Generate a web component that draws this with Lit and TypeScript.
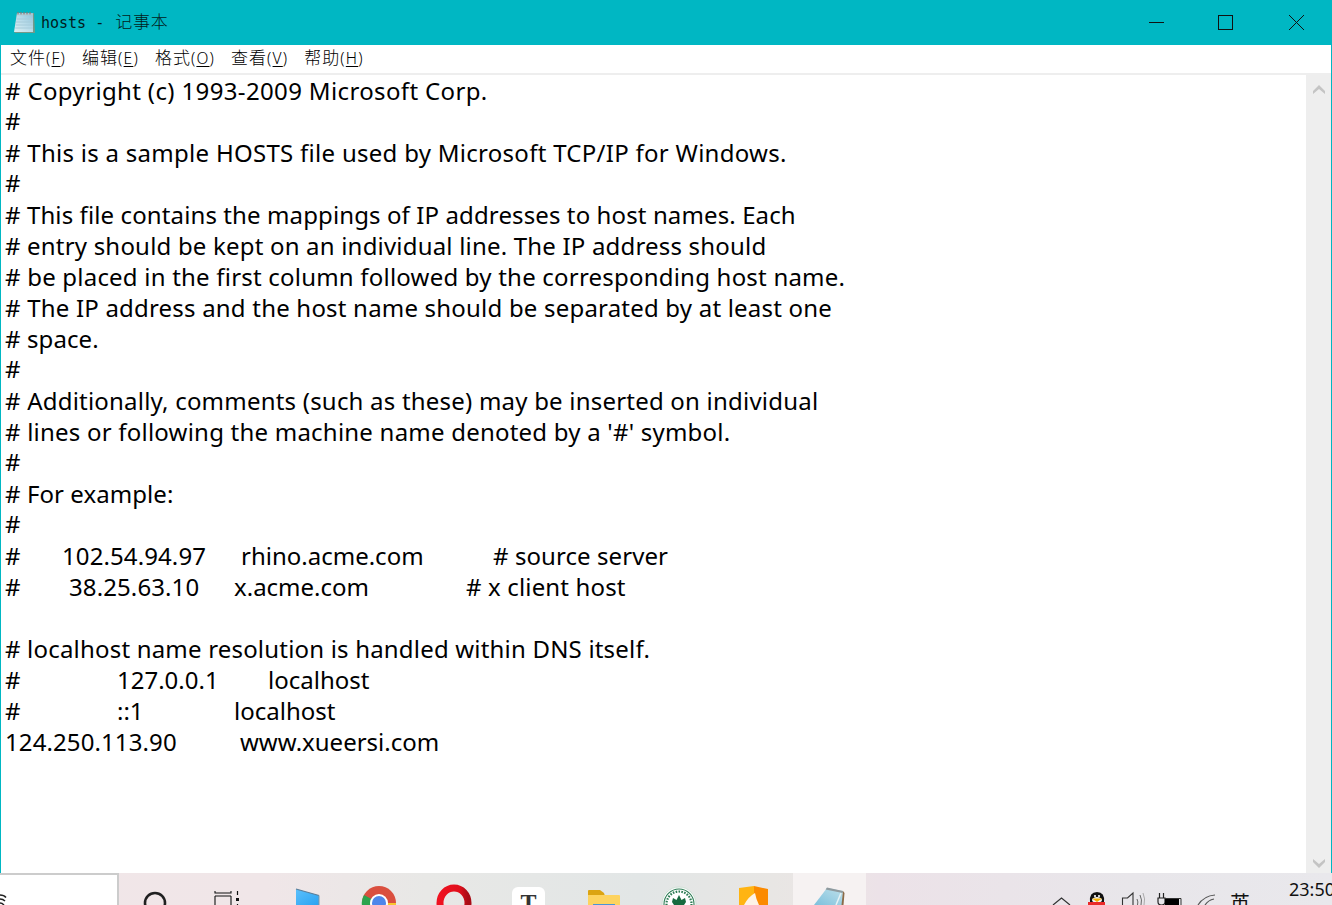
import { LitElement, html, css, svg } from "lit";
import { customElement } from "lit/decorators.js";

type Seg = [string, number, number?];
const LINES: Seg[][] = [
  [["# Copyright (c) 1993-2009 Microsoft Corp.", 0, 0.36]],
  [["#", 0]],
  [["# This is a sample HOSTS file used by Microsoft TCP/IP for Windows.", 0, 0.28]],
  [["#", 0]],
  [["# This file contains the mappings of IP addresses to host names. Each", 0, 0.11]],
  [["# entry should be kept on an individual line. The IP address should", 0, 0.19]],
  [["# be placed in the first column followed by the corresponding host name.", 0, 0.21]],
  [["# The IP address and the host name should be separated by at least one", 0, 0.2]],
  [["# space.", 0, 0.1]],
  [["#", 0]],
  [["# Additionally, comments (such as these) may be inserted on individual", 0, 0.21]],
  [["# lines or following the machine name denoted by a '#' symbol.", 0, 0.22]],
  [["#", 0]],
  [["# For example:", 0, 0.07]],
  [["#", 0]],
  [["#", 0], ["102.54.94.97", 57, 0.1], ["rhino.acme.com", 236], ["# source server", 488, 0.08]],
  [["#", 0], ["38.25.63.10", 64, 0.1], ["x.acme.com", 229], ["# x client host", 461, 0.15]],
  [["", 0]],
  [["# localhost name resolution is handled within DNS itself.", 0, 0.19]],
  [["#", 0], ["127.0.0.1", 112], ["localhost", 263]],
  [["#", 0], ["::1", 112], ["localhost", 229]],
  [["124.250.113.90", 0, 0.1], ["www.xueersi.com", 235]],
];
const MENUS: [string, string][] = [
  ["文件", "F"],
  ["编辑", "E"],
  ["格式", "O"],
  ["查看", "V"],
  ["帮助", "H"],
];

@customElement("app-root")
export class AppRoot extends LitElement {
  static styles = css`
    :host {
      display: flex;
      flex-direction: column;
      width: 1332px;
      height: 905px;
      overflow: hidden;
      background: #fff;
      font-family: "Noto Sans", "Noto Sans CJK SC", sans-serif;
    }
    .window {
      flex: 1;
      min-height: 0;
      display: flex;
      flex-direction: column;
      border-left: 1px solid #00b7c3;
      border-right: 1px solid #00b7c3;
    }
    .titlebar {
      height: 45px;
      flex: none;
      margin: 0 -1px;
      background: #00b7c3;
      display: flex;
      align-items: center;
      padding-left: 13px;
      color: #021c20;
      box-sizing: border-box;
    }
    .title {
      margin-left: 4px;
      padding-bottom: 4px;
      white-space: pre;
      display: flex;
      align-items: center;
    }
    .title-latin {
      font-family: "DejaVu Sans Mono", monospace;
      font-size: 15px;
      margin-top: 4px;
    }
    .title-cjk {
      font-family: "Noto Sans CJK SC", sans-serif;
      font-size: 17px;
      letter-spacing: 0.7px;
      font-weight: 300;
      margin-left: 2px;
    }
    .controls {
      margin-left: auto;
      display: flex;
      height: 45px;
    }
    .ctl {
      width: 71px;
      display: flex;
      align-items: center;
      justify-content: center;
    }
    .ctl.min {
      margin-right: -2px;
    }
    .menubar {
      height: 23px;
      padding: 0 0 5px 9px;
      flex: none;
      display: flex;
      align-items: center;
      gap: 16px;
      font-size: 15.5px;
      font-weight: 300;
      color: #000;
      border-bottom: 2px solid #eeeeee;
      font-family: "Noto Sans CJK SC", sans-serif;
    }
    .menu-cjk {
      font-size: 17px;
      letter-spacing: 1px;
    }
    .menu-key {
      letter-spacing: 1.2px;
      font-family: "Noto Sans", sans-serif;
    }
    .menubar u {
      text-underline-offset: 2px;
    }
    .body {
      flex: 1;
      min-height: 0;
      display: flex;
    }
    .editor {
      flex: 1;
      padding: 0 0 0 4px;
      font-size: 24px;
      line-height: 31px;
      color: #000;
      overflow: hidden;
    }
    .line {
      display: flex;
      height: 31px;
      white-space: pre;
    }
    .seg {
      flex: none;
    }
    .line.lone .seg {
      margin-top: -1px;
    }
    .scroll {
      width: 25px;
      flex: none;
      background: #eeeeee;
      display: flex;
      flex-direction: column;
      justify-content: space-between;
      align-items: center;
      padding: 10px 0 5px;
      box-sizing: border-box;
    }
    .taskbar {
      height: 32px;
      flex: none;
      display: flex;
      overflow: hidden;
      background: linear-gradient(90deg, #f1e6e8 0%, #f0e6e8 20%, #e8e8e6 32%, #e2e6e6 48%, #e8e6e4 58%, #ece5e5 63%, #ece2e8 66%, #e8e6ea 85%, #e9e8ec 100%);
    }
    .start {
      width: 119px;
      flex: none;
      background: #fff;
      border-top: 2px solid #cccccc;
      border-right: 2px solid #cccccc;
      box-sizing: border-box;
      overflow: hidden;
    }
    .start svg {
      display: block;
    }
    .tb-icons {
      flex: 1;
      position: relative;
    }
    .tb-svg {
      position: absolute;
      left: 0;
      top: 0;
    }
    .clock {
      position: absolute;
      left: 1170px;
      top: 4px;
      font-size: 18px;
      line-height: 24px;
      color: #111;
      white-space: pre;
    }
    .ime {
      position: absolute;
      left: 1111px;
      top: 16px;
      font-family: "Noto Sans CJK SC", sans-serif;
      font-size: 20px;
      line-height: 28px;
      color: #111;
    }
  `;

  private seg(lineSegs: Seg[], i: number) {
    const [t, x, ls] = lineSegs[i];
    const next = lineSegs[i + 1];
    const parts: string[] = [];
    if (next) parts.push(`width:${next[1] - x}px`);
    if (ls) parts.push(`letter-spacing:${ls}px`);
    return html`<span class="seg" style=${parts.join(";")}>${t}</span>`;
  }

  private notepad() {
    return html`<svg width="24" height="24" viewBox="0 0 24 24">
      <defs>
        <linearGradient id="np" x1="0" y1="1" x2="1" y2="0">
          <stop offset="0" stop-color="#dff0f2" />
          <stop offset="0.5" stop-color="#b9dcea" />
          <stop offset="1" stop-color="#8fc2d8" />
        </linearGradient>
      </defs>
      <path d="M4 2h17l1 20H1.5z" fill="#9b8f74" opacity="0.75" />
      <path d="M4 2h16v19H1z" fill="url(#np)" />
      <path d="M3.4 8h16.6M3 11h17M2.6 14h17.4M2.2 17h17.8" stroke="#a6cbda" stroke-width="1" />
      <path d="M5 1v3M8 1v3M11 1v3M14 1v3M17 1v3" stroke="#7d7d7d" stroke-width="1.4" />
      <path d="M4 3.5h16" stroke="#b7c5ca" stroke-width="1.6" opacity="0.7" />
    </svg>`;
  }

  private taskIcons() {
    return svg`
      <svg class="tb-svg" width="1213" height="32" viewBox="119 873 1213 32">
        <defs>
          <linearGradient id="npb" x1="0" y1="1" x2="1" y2="0">
            <stop offset="0" stop-color="#7cc0dc"/>
            <stop offset="1" stop-color="#bfe0ea"/>
          </linearGradient>
          <linearGradient id="blu" x1="0" y1="0" x2="1" y2="1">
            <stop offset="0" stop-color="#5bc0fb"/>
            <stop offset="1" stop-color="#2ba3f2"/>
          </linearGradient>
          <linearGradient id="opr" x1="0" y1="0" x2="1" y2="0">
            <stop offset="0" stop-color="#ef1220"/>
            <stop offset="0.7" stop-color="#e00f1c"/>
            <stop offset="1" stop-color="#a80c16"/>
          </linearGradient>
        </defs>
        <!-- search -->
        <circle cx="155" cy="903" r="10" fill="none" stroke="#202020" stroke-width="2.6"/>
        <!-- task view -->
        <path d="M215 891v2h16v-2M215 896h16M215 896v9M231 896v9" fill="none" stroke="#111" stroke-width="1.1"/>
        <rect x="236" y="898" width="3" height="3" fill="#111"/>
        <path d="M237.5 891v4M237.5 904v1" stroke="#111" stroke-width="1.2"/>
        <!-- blue -->
        <path d="M296 889l23 6.5V905h-23z" fill="url(#blu)"/>
        <path d="M296 889l23 6.5" fill="none" stroke="#5a7d98" stroke-width="1.1"/>
        <path d="M319 895.5V905" fill="none" stroke="#7f97a6" stroke-width="1"/>
        <!-- chrome -->
        <circle cx="379" cy="903" r="17" fill="#da4f3f"/>
        <path d="M379 903L364 895a17 17 0 0 0 8 24z" fill="#2da44e"/>
        <path d="M379 903h17a17 17 0 0 1-9 15z" fill="#f8c72f"/>
        <circle cx="379" cy="903" r="9" fill="#fff"/>
        <circle cx="379" cy="903" r="7" fill="#4e86ea"/>
        <!-- opera -->
        <ellipse cx="454" cy="903" rx="14" ry="15" fill="none" stroke="url(#opr)" stroke-width="7"/>
        <!-- typora -->
        <rect x="512" y="887" width="33" height="26" rx="6" fill="#fff"/>
        <text x="528.5" y="910" text-anchor="middle" font-family="Liberation Serif" font-weight="bold" font-size="24" fill="#333">T</text>
        <!-- folder -->
        <path d="M588 891q0-1 1-1h11l4 3 1 3h-17z" fill="#dba412"/>
        <path d="M588 895h31q1 0 1 1v9h-32z" fill="#fdd35f"/>
        <rect x="593" y="904" width="22" height="1" fill="#4a95d6"/>
        <!-- seal -->
        <circle cx="679" cy="904" r="17" fill="#fff" stroke="#cfe0d6" stroke-width="1"/>
        <circle cx="679" cy="904" r="15" fill="none" stroke="#2d7d55" stroke-width="1.1"/>
        <circle cx="679" cy="904" r="12.5" fill="none" stroke="#2d7d55" stroke-width="2.2" stroke-dasharray="1.6 1.3"/>
        <circle cx="679" cy="904" r="10" fill="#fff"/>
        <path d="M679 895l2.5 5 3.5-2 1 4-2 3h-10l-2-3 1-4 3.5 2z" fill="#176b40"/>
        <!-- orange -->
        <path d="M739 888l15-2 0 19h-15z" fill="#ffb412"/>
        <path d="M754 886l14 3v16h-14z" fill="#fb8a00"/>
        <path d="M744 905q4-8 11-12q1 6 4 12z" fill="#fdf2e6"/>
        <!-- notepad -->
        <rect x="793" y="873" width="73" height="32" fill="#f6f2f2"/>
        <path d="M827 888l16 3-1 14h-28z" fill="url(#npb)"/>
        <path d="M827 887.5l16 3.5-.4 2-17-3.5z" fill="#8f9a9e"/>
        <path d="M843 891l1.5 2-1 12h-2z" fill="#8a6b48"/>
        <path d="M836 905l5-12" stroke="#e6f2f5" stroke-width="1.5"/>
        <!-- chevron -->
        <path d="M1053 905l8.5-7 8.5 7" fill="none" stroke="#333" stroke-width="1.2"/>
        <!-- qq -->
        <path d="M1090 902q-1-10 7-10q8 0 7 10z" fill="#111"/>
        <ellipse cx="1097" cy="900" rx="5" ry="3" fill="#f4f4f4"/>
        <path d="M1092 898.5h10l-5 3.5z" fill="#f4b000"/>
        <circle cx="1095" cy="896" r="1.1" fill="#fff"/>
        <circle cx="1099" cy="896" r="1.1" fill="#fff"/>
        <rect x="1088" y="902" width="17" height="3" fill="#ea2a2a"/>
        <!-- speaker -->
        <path d="M1122.5 905v-7h5l5.5-5v12" fill="none" stroke="#333" stroke-width="1.1"/>
        <path d="M1137 899a8 8 0 0 1 .5 6M1140 895a14 14 0 0 1 1 10" fill="none" stroke="#666" stroke-width="1"/>
        <path d="M1143 893a18 18 0 0 1 1 12" fill="none" stroke="#aaa" stroke-width="1"/>
        <!-- power -->
        <path d="M1158 898h7v4q0 3-3.5 3t-3.5-3zM1159.5 893v5M1163.5 893v5" fill="none" stroke="#222" stroke-width="1.2"/>
        <rect x="1165" y="898" width="14" height="7" fill="#000"/>
        <path d="M1165 898.5h16v6.5" fill="none" stroke="#333"/>
        <!-- wifi -->
        <path d="M1198 905a22 22 0 0 1 17-10M1205 905a14 14 0 0 1 9-6" fill="none" stroke="#555" stroke-width="1.2"/>
      </svg>`;
  }

  render() {
    return html`
      <div class="window">
        <div class="titlebar">
          ${this.notepad()}
          <span class="title"><span class="title-latin">hosts - </span><span class="title-cjk">记事本</span></span>
          <div class="controls">
            <div class="ctl min">
              <svg width="15" height="15"><path d="M0 7.5h15" stroke="#111" stroke-width="1" /></svg>
            </div>
            <div class="ctl">
              <svg width="15" height="15"><rect x="0.5" y="0.5" width="14" height="14" fill="none" stroke="#111" /></svg>
            </div>
            <div class="ctl">
              <svg width="15" height="15"><path d="M0 0l15 15M15 0L0 15" stroke="#111" stroke-width="1" /></svg>
            </div>
          </div>
        </div>
        <div class="menubar">
          ${MENUS.map(
            ([t, k]) =>
              html`<span><span class="menu-cjk">${t}</span><span class="menu-key">(<u>${k}</u>)</span></span>`
          )}
        </div>
        <div class="body">
          <div class="editor">
            ${LINES.map(
              (l) =>
                html`<div class="line ${l.length === 1 && l[0][0] === "#" ? "lone" : ""}">${l.map((_, i) => this.seg(l, i))}</div>`
            )}
          </div>
          <div class="scroll">
            <svg width="12" height="9"><path d="M0 6l6-6 6 6v3l-6-5-6 5z" fill="#c4c4c4" /></svg>
            <svg width="12" height="9"><path d="M0 0l6 5 6-5v3l-6 6-6-6z" fill="#c4c4c4" /></svg>
          </div>
        </div>
      </div>
      <div class="taskbar">
        <div class="start">
          <svg width="10" height="30" viewBox="0 875 10 30">
            <path d="M0 895q4 0 6 2.5M0 899q3 0 5 2M0 903q2 0 4 2" fill="none" stroke="#222" stroke-width="1.5" />
          </svg>
        </div>
        <div class="tb-icons">
          ${this.taskIcons()}
          <span class="ime">英</span>
          <span class="clock">23:50</span>
        </div>
      </div>
    `;
  }
}
